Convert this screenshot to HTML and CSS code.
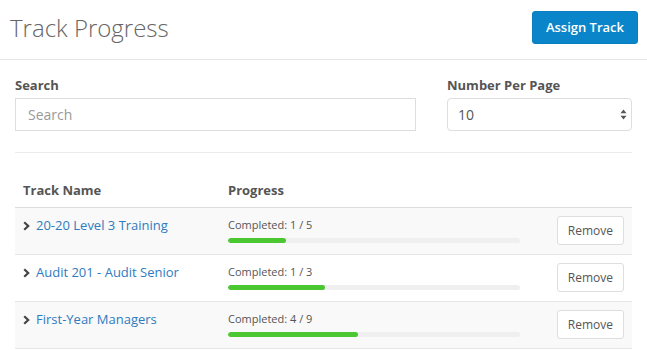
FILE: index.html
```html
<!DOCTYPE html>
<html lang="en">
<head>
  <meta charset="UTF-8" />
  <meta name="viewport" content="width=device-width, initial-scale=1.0"/>
  <title>Track Progress</title>
  <link rel="stylesheet" href="styles.css">
</head>
<body>
  <div class="page-header">
    <h1>Track Progress</h1>
    <button class="btn-primary">Assign Track</button>
  </div>

  <div class="content">
    <div class="filters">
      <div class="field">
        <label for="search">Search</label>
        <input type="text" id="search" class="search-input" placeholder="Search">
      </div>
      <div class="field">
        <label for="perPage">Number Per Page</label>
        <div class="select-wrap">
          <select id="perPage" class="per-page">
            <option>10</option>
            <option>25</option>
            <option>50</option>
          </select>
          <svg class="select-arrows" width="7" height="11" viewBox="0 0 7 11">
            <path d="M3.5 0.5 L6.5 4.3 L0.5 4.3 Z" fill="#555"/>
            <path d="M3.5 10.5 L6.5 6.7 L0.5 6.7 Z" fill="#555"/>
          </svg>
        </div>
      </div>
    </div>

    <hr class="divider">

    <table class="tracks">
      <thead>
        <tr>
          <th class="col-name">Track Name</th>
          <th class="col-progress">Progress</th>
          <th class="col-action"></th>
        </tr>
      </thead>
      <tbody id="trackRows"></tbody>
    </table>
  </div>

  <script>
    const tracks = [
      { name: "20-20 Level 3 Training", done: 1, total: 5 },
      { name: "Audit 201 - Audit Senior", done: 1, total: 3 },
      { name: "First-Year Managers", done: 4, total: 9 }
    ];

    const chevron = '<svg class="chevron" width="7" height="10" viewBox="0 0 7 10">' +
      '<path d="M1.2 1.2 L5.2 5 L1.2 8.8" fill="none" stroke="#444" stroke-width="2.2"/></svg>';

    const rowsEl = document.getElementById("trackRows");

    tracks.forEach(function (t) {
      const pct = (t.done / t.total) * 100;
      const tr = document.createElement("tr");
      tr.innerHTML =
        '<td class="name-cell">' + chevron + '<a href="#">' + t.name + '</a></td>' +
        '<td class="progress-cell"><div class="progress-label">Completed: ' + t.done + ' / ' + t.total + '</div>' +
        '<div class="bar"><div class="bar-fill" style="width:' + pct.toFixed(2) + '%"></div></div></td>' +
        '<td class="action-cell"><button class="btn-remove">Remove</button></td>';
      rowsEl.appendChild(tr);
    });
  </script>
</body>
</html>
```

FILE: styles.css
```css
body {
  font-family: 'Open Sans', 'Liberation Sans', sans-serif;
  margin: 0;
  background: #fff;
  color: #555;
}

.page-header {
  display: flex;
  justify-content: space-between;
  align-items: center;
  padding: 11px 9px 15px 10px;
  border-bottom: 1px solid #e6e6e6;
}

.page-header h1 {
  margin: 0;
  font-size: 24px;
  font-weight: 300;
  line-height: 33px;
  color: #666;
}

.btn-primary {
  font-family: inherit;
  font-size: 13px;
  font-weight: 600;
  line-height: 19px;
  padding: 6px 13px;
  color: #fff;
  background-color: #0a85c9;
  border: 1px solid #0a7fc0;
  border-radius: 3px;
  cursor: pointer;
}

.content {
  padding: 16px 15px 0 15px;
}

.filters {
  display: grid;
  grid-template-columns: 1fr 185px;
  column-gap: 31px;
}

.field label {
  display: block;
  font-size: 13px;
  font-weight: 700;
  line-height: 18px;
  color: #555;
  margin-bottom: 4px;
}

.search-input,
.per-page {
  box-sizing: border-box;
  width: 100%;
  height: 33px;
  font-family: inherit;
  font-size: 14px;
  color: #555;
  background: #fff;
  border: 1px solid #dedede;
  outline: none;
}

.search-input {
  padding: 0 12px;
  border-radius: 0;
}

.search-input::placeholder {
  color: #999;
}

.select-wrap {
  position: relative;
}

.per-page {
  padding: 0 10px;
  border-radius: 4px;
  -webkit-appearance: none;
  appearance: none;
}

.select-arrows {
  position: absolute;
  right: 5px;
  top: 11px;
  pointer-events: none;
}

.divider {
  border: none;
  border-top: 1px solid #ececec;
  margin: 21px 0 20px 0;
}

.tracks {
  width: 100%;
  border-collapse: collapse;
  table-layout: fixed;
}

.tracks th {
  text-align: left;
  font-size: 13px;
  font-weight: 700;
  line-height: 18px;
  padding: 8px;
  color: #555;
  border-bottom: 1px solid #dcdcdc;
}

.col-name {
  width: 189px;
}

.col-progress {
  width: 292px;
}

.tracks td {
  padding: 7px 8px 8px 8px;
  border-bottom: 1px solid #e6e6e6;
  height: 31px;
}

.tracks tbody tr:nth-child(odd) {
  background: #f9f9f9;
}

.name-cell {
  vertical-align: top;
  font-size: 13px;
  line-height: 20px;
  white-space: nowrap;
}

.chevron {
  margin-right: 6px;
  vertical-align: -1px;
}

.name-cell a {
  color: #2f7bbf;
  text-decoration: none;
}

.progress-cell {
  vertical-align: top;
}

.progress-label {
  font-size: 11px;
  line-height: 16px;
  margin-top: 2px;
  color: #555;
}

.bar {
  height: 5px;
  margin-top: 5px;
  background: #efefef;
  border-radius: 3px;
  overflow: hidden;
}

.bar-fill {
  height: 100%;
  background: #4bc731;
  border-radius: 3px;
}

.action-cell {
  text-align: right;
  vertical-align: middle;
}

.btn-remove {
  font-family: inherit;
  font-size: 12px;
  line-height: 17px;
  padding: 5px 10px;
  color: #555;
  background: #fff;
  border: 1px solid #dedede;
  border-radius: 3px;
  cursor: pointer;
}
```
